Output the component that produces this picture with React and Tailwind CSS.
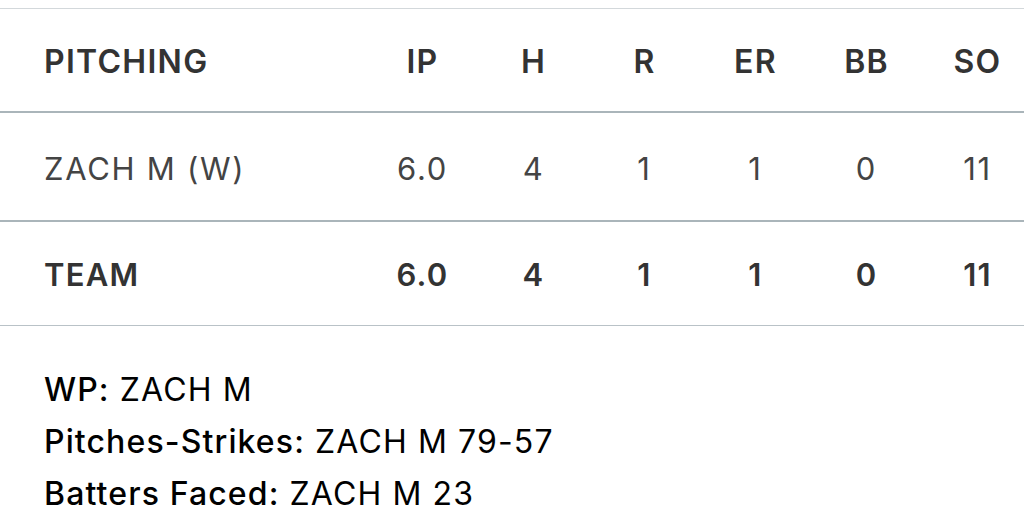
const COLS = ['IP', 'H', 'R', 'ER', 'BB', 'SO'];

const ROWS = [
  { name: 'ZACH M (W)', stats: ['6.0', '4', '1', '1', '0', '11'], bold: false },
  { name: 'TEAM', stats: ['6.0', '4', '1', '1', '0', '11'], bold: true },
];

const NOTES = [
  { label: 'WP:', value: 'ZACH M' },
  { label: 'Pitches-Strikes:', value: 'ZACH M 79-57' },
  { label: 'Batters Faced:', value: 'ZACH M 23' },
];

export default function App() {
  return (
    <div className="w-[1024px] h-[525px] overflow-hidden bg-white font-['Inter','Liberation_Sans',sans-serif]">
      <div className="pt-2">
        {/* Header */}
        <div className="grid grid-cols-[367px_repeat(6,111px)] h-[105px] pt-[4px] items-center border-t border-[#d3d8db] border-b-2 border-b-[#aab5ba] text-[32px] font-semibold text-[#333] tracking-[0.04em]">
          <div className="pl-[44px]">PITCHING</div>
          {COLS.map((c) => (
            <div key={c} className="text-center">{c}</div>
          ))}
        </div>

        {ROWS.map((r, i) => (
          <div
            key={r.name}
            className={`grid grid-cols-[367px_repeat(6,111px)] items-center text-[31px] ${
              i === 0
                ? 'h-[109px] pt-[5px] border-b-2 border-b-[#aab5ba] text-[#444] font-normal tracking-[0.055em]'
                : 'h-[104px] pt-[3px] border-b border-b-[#b9c2c7] text-[#333] font-semibold tracking-[0.04em]'
            }`}
          >
            <div className="pl-[44px]">{r.name}</div>
            {r.stats.map((s, j) => (
              <div key={j} className="text-center">{s}</div>
            ))}
          </div>
        ))}
      </div>

      {/* Notes */}
      <div className="pl-[44px] pt-[44px] flex flex-col gap-[12px] text-[32px] text-black leading-[40px] tracking-[0.035em]">
        {NOTES.map((n) => (
          <div key={n.label}>
            <span className="font-medium">{n.label}</span> {n.value}
          </div>
        ))}
      </div>
    </div>
  );
}
